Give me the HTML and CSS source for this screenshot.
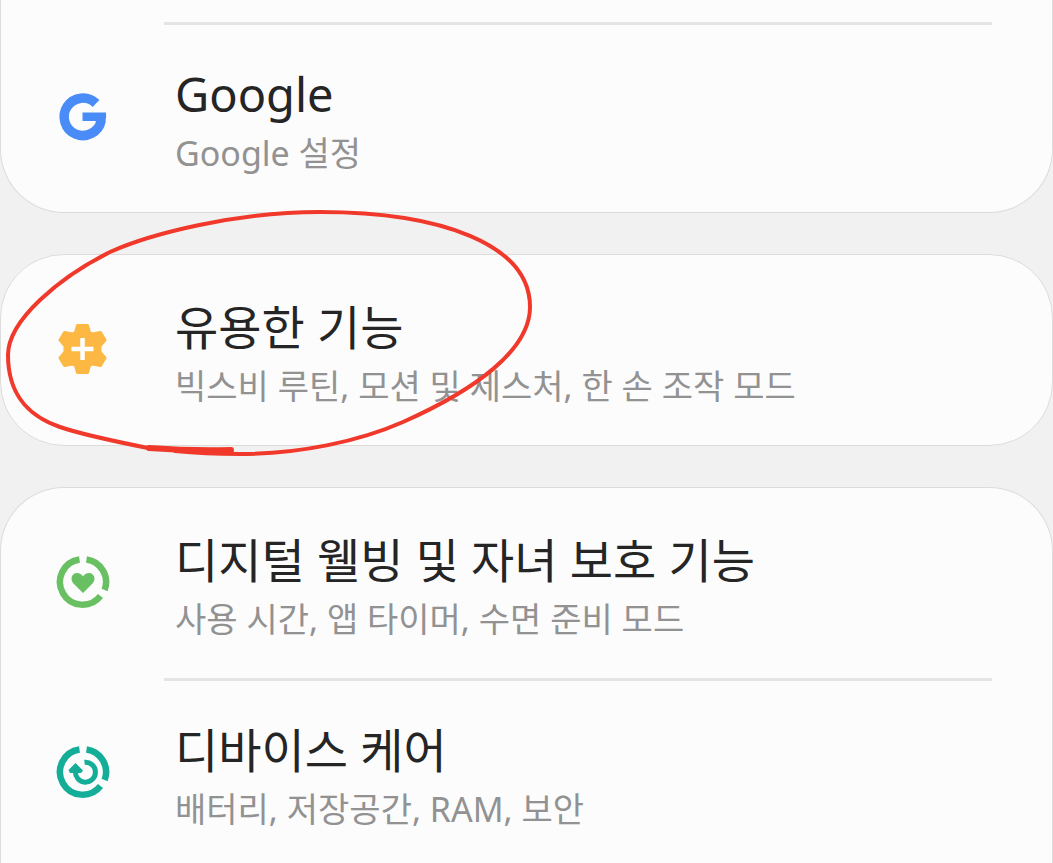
FILE: index.html
```html
<!DOCTYPE html>
<html lang="ko">
<head>
<meta charset="utf-8">
<meta name="viewport" content="width=device-width, initial-scale=1">
<title>설정</title>
<link rel="stylesheet" href="styles.css">
</head>
<body>
<main class="settings">
  <section class="card card-continued">
    <a class="row divided" href="#google">
      <svg class="icon" viewBox="0 0 56 56" aria-hidden="true">
        <path fill="none" stroke="#4a8cf7" stroke-width="9.5" d="M41 15.500A18.7 18.7 0 1 0 46.2 32.5"/>
        <path fill="#4a8cf7" d="M27.500 24.500H51Q51.600 29 50.300 34L42 36 40.500 33H27.500Z"/>
      </svg>
      <span class="text"><span class="title">Google</span><span class="summary">Google 설정</span></span>
    </a>
  </section>

  <section class="card">
    <a class="row" href="#advanced">
      <svg class="icon" viewBox="1 0 56 56" aria-hidden="true">
        <path fill="#fdb843" stroke="#fdb843" stroke-width="3" stroke-linejoin="round" d="M23.500 4.500H33.500L35.500 11.500 38.500 13 46.500 11.500 51 19 46 25V31L51 37 46.500 44.500 38.500 43 35.500 44.500 33.500 51.500H23.500L21.500 44.500 18.500 43 10.500 44.500 6 37 11 31V25L6 19 10.500 11.500 18.500 13 21.500 11.500Z"/>
        <path stroke="#fff" stroke-width="4.500" d="M17.500 28H39.500M28.500 17V39"/>
      </svg>
      <span class="text"><span class="title">유용한 기능</span><span class="summary">빅스비 루틴, 모션 및 제스처, 한 손 조작 모드</span></span>
    </a>
  </section>

  <section class="card card-open">
    <a class="row" href="#wellbeing">
      <svg class="icon" viewBox="0 0 56 56" aria-hidden="true">
        <path fill="none" stroke="#69c063" stroke-width="6.500" d="M24.500 5.500A22.700 22.700 0 1 0 45.500 42M31.500 5.500A22.700 22.700 0 0 1 49.600 36"/>
        <path fill="#69c063" d="M28 39 18.500 29.500C14.500 25 17 19 22 19Q26 19 28 22.500 30 19 34 19C39 19 41.500 25 37.500 29.500Z"/>
      </svg>
      <span class="text"><span class="title">디지털 웰빙 및 자녀 보호 기능</span><span class="summary">사용 시간, 앱 타이머, 수면 준비 모드</span></span>
    </a>
    <a class="row divided" href="#device-care">
      <svg class="icon" viewBox="0 0 56 56" aria-hidden="true">
        <path fill="none" stroke="#14ae98" stroke-width="6.500" d="M24.500 5.500A22.700 22.700 0 1 0 45.500 42M31.500 5.500A22.700 22.700 0 0 1 49.600 36"/>
        <path fill="none" stroke="#14ae98" stroke-width="5" d="M29.500 18.200A10 10 0 1 1 20.500 27"/>
        <path fill="#14ae98" d="M20.500 19 28 26.500 26 29H15L13.500 26Z"/>
      </svg>
      <span class="text"><span class="title">디바이스 케어</span><span class="summary">배터리, 저장공간, RAM, 보안</span></span>
    </a>
  </section>

  <svg class="marker" viewBox="0 0 540 260" aria-hidden="true">
    <path stroke-width="4" d="M148 248C128 244 80 234 60 227C34 218 8 200 8 155C8 120 60 77 110 52C150 34 235 12 320 12C440 12 530 44 530 107C530 150 475 190 403 222C360 241 300 254 240 254"/>
    <path stroke-width="6" d="M149 248Q190 251 231 250"/>
    <path stroke-width="4" d="M175 251Q205 254 240 254"/>
  </svg>
</main>
</body>
</html>
```
FILE: styles.css
```css
* {
  box-sizing: border-box;
}

body {
  margin: 0;
  background: #f1f1f1;
  font-family: "Noto Sans", "Noto Sans CJK KR", sans-serif;
}

.settings {
  position: relative;
  display: flex;
  flex-direction: column;
  gap: 41px;
  height: 100vh;
  overflow: hidden;
}

.card {
  flex: none;
  border: 1px solid #dcdcdc;
  border-radius: 64px;
  background: #fcfcfc;
}

.card-continued {
  padding-top: 22px;
  border-top: 0;
  border-top-left-radius: 0;
  border-top-right-radius: 0;
}

.card-open {
  border-bottom: 0;
  border-bottom-left-radius: 0;
  border-bottom-right-radius: 0;
}

.row {
  display: grid;
  grid-template-columns: 56px 1fr;
  column-gap: 64px;
  align-items: center;
  min-height: 190px;
  padding: 0 60px 0 54px;
  color: #252525;
  text-decoration: none;
}

.divided {
  background: linear-gradient(#e4e4e4, #e4e4e4) 163px 0 / calc(100% - 223px) 3px no-repeat;
}

.icon {
  display: block;
  width: 56px;
  height: 56px;
  margin-bottom: 2px;
}

.text {
  display: flex;
  flex-direction: column;
  min-width: 0;
  padding-top: 8px;
}

.title {
  font-size: 47px;
  line-height: 64px;
}

.summary {
  color: #929292;
  font-size: 34px;
  line-height: 54px;
}

.marker {
  position: absolute;
  top: 200px;
  left: 0;
  width: 540px;
  height: 260px;
  fill: none;
  stroke: #f0382b;
  stroke-linecap: round;
  stroke-linejoin: round;
  pointer-events: none;
}
```
